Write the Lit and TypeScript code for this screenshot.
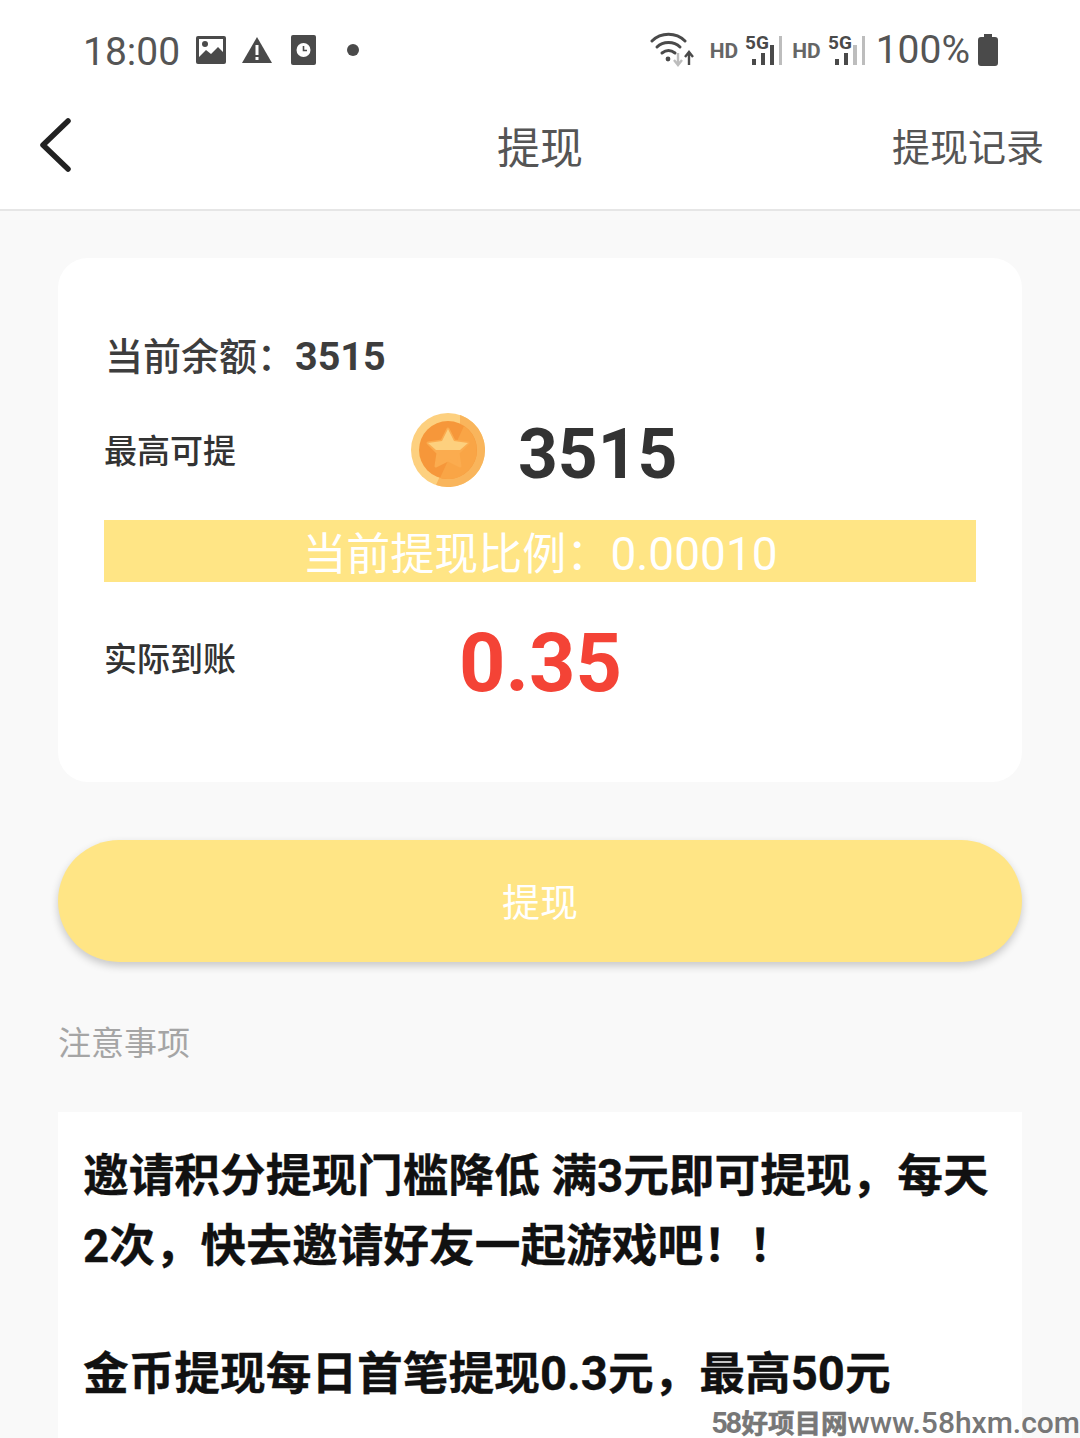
import { LitElement, html, css, svg } from 'lit';
import { customElement } from 'lit/decorators.js';

const signal = (lit: number) => svg`
  <svg class="signal" width="37" height="36" viewBox="0 0 37 36">
    <text x="0" y="17" class="five-g">5G</text>
    ${[
      [7, 27, 4, 6],
      [16, 21, 4, 12],
      [25, 13, 4, 20],
      [34, 4, 3, 29],
    ].map(
      ([x, y, w, h], i) =>
        svg`<rect x=${x} y=${y} width=${w} height=${h} fill=${i < lit ? '#4a4a4a' : '#bdbdbd'}></rect>`
    )}
  </svg>`;

@customElement('app-root')
export class AppRoot extends LitElement {
  static styles = css`
    :host {
      display: block;
      width: 1080px;
      height: 1438px;
      overflow: hidden;
      position: relative;
      background: #f9f9f9;
      font-family: Roboto, 'Noto Sans CJK SC', sans-serif;
      color: #333;
    }
    .status {
      height: 100px;
      box-sizing: border-box;
      padding: 0 82px 0 83px;
      background: #fff;
      display: flex;
      align-items: center;
      justify-content: space-between;
      color: #4a4a4a;
    }
    .status-side {
      display: flex;
      align-items: center;
    }
    .time {
      font-size: 39px;
      padding-top: 4px;
      margin-right: 16px;
      line-height: 1;
      color: #555;
    }
    .status-side svg {
      display: block;
    }
    .status-left svg {
      margin-right: 16px;
    }
    .status-left .clock {
      margin-left: 3px;
    }
    .dot {
      width: 12px;
      height: 12px;
      border-radius: 50%;
      background: #4a4a4a;
      margin-left: 15px;
    }
    .hd {
      font-size: 21px;
      font-weight: 700;
      color: #666;
      margin-right: 7px;
      padding-top: 2px;
    }
    .five-g {
      font: 700 19px Roboto, sans-serif;
      fill: #4a4a4a;
    }
    .signal {
      margin-right: 10px;
    }
    .wifi {
      margin-right: 16px;
    }
    .pct {
      font-size: 39px;
      line-height: 1;
      color: #555;
      margin: 0 8px 0 1px;
    }
    .header {
      height: 111px;
      box-sizing: border-box;
      background: #fff;
      border-bottom: 2px solid #e6e6e6;
      display: grid;
      grid-template-columns: 1fr auto 1fr;
      align-items: center;
      padding: 0 36px 20px;
    }
    .title {
      font-size: 43px;
      color: #555;
    }
    .records {
      justify-self: end;
      font-size: 38px;
      color: #555;
    }
    .back {
      display: block;
      margin-left: 4px;
    }
    .main {
      padding: 47px 58px 0;
      display: flex;
      flex-direction: column;
    }
    .card {
      height: 524px;
      box-sizing: border-box;
      background: #fff;
      border-radius: 30px;
      padding: 74px 46px 0;
    }
    .balance {
      font-size: 38px;
      font-weight: 500;
      line-height: 50px;
      margin-left: 1px;
      color: #3d3d3d;
    }
    .balance b {
      font-size: 39.5px;
      font-weight: 700;
    }
    .row {
      display: flex;
      align-items: center;
      font-size: 33px;
      font-weight: 500;
    }
    .row-max {
      margin-top: 27px;
      height: 80px;
    }
    .coin {
      margin: 2px 0 0 174px;
      display: block;
      filter: blur(0.7px);
    }
    .amount {
      font-size: 69.5px;
      font-weight: 700;
      margin: 12px 0 0 32px;
      line-height: 1;
      color: #333;
    }
    .ratio {
      margin-top: 31px;
      height: 62px;
      background: #ffe585;
      color: #fff;
      font-size: 44px;
      line-height: 68px;
      text-align: center;
    }
    .ratio span {
      font-size: 46px;
    }
    .row-real {
      margin-top: 35px;
      height: 80px;
    }
    .real {
      font-size: 81px;
      font-weight: 700;
      color: #f44336;
      line-height: 1;
      margin: 12px 0 0 223px;
    }
    .submit {
      margin-top: 58px;
      height: 122px;
      box-sizing: border-box;
      padding-bottom: 4px;
      border-radius: 61px;
      background: #ffe585;
      box-shadow: 0 4px 8px rgba(0, 0, 0, 0.2);
      color: #fff;
      font-size: 38px;
      display: flex;
      align-items: center;
      justify-content: center;
    }
    .notes-label {
      margin-top: 58px;
      font-size: 33px;
      line-height: 48px;
      color: #a5a5a5;
    }
    .notes {
      margin-top: 44px;
      height: 400px;
      box-sizing: border-box;
      background: #fff;
      padding: 30px 25px;
      font-size: 45.7px;
      font-weight: 700;
      line-height: 70px;
      color: #111;
      -webkit-text-stroke: 0.3px #111;
    }
    .notes p {
      margin: 0 0 57px;
    }
    .notes span {
      font-size: 47.3px;
    }
    .mark {
      position: absolute;
      right: 0;
      bottom: 0;
      display: flex;
      align-items: baseline;
      font-size: 26.5px;
      font-weight: 700;
      line-height: 28px;
      color: #777;
      white-space: nowrap;
    }
    .mark .cn {
      -webkit-text-stroke: 0.6px #777;
    }
    .mark .num {
      font-size: 29px;
      letter-spacing: -2.5px;
      margin-right: 2px;
    }
    .mark .url {
      font-size: 30px;
      font-weight: 500;
    }
  `;

  render() {
    return html`
      <div class="status">
        <div class="status-side status-left">
          <span class="time">18:00</span>
          <svg width="30" height="30" viewBox="0 0 30 30">
            <rect y="1" width="30" height="28" rx="2" fill="#4a4a4a"></rect>
            <rect x="3" y="4" width="24" height="19" fill="#fff"></rect>
            <circle cx="9" cy="9" r="3" fill="#4a4a4a"></circle>
            <path d="M3 22 L10 15 L15 19 L22 12 L27 17 V24 H3 Z" fill="#4a4a4a"></path>
          </svg>
          <svg width="30" height="28" viewBox="0 0 30 28">
            <path d="M15 1 L30 27 H0 Z" fill="#4a4a4a"></path>
            <rect x="13.5" y="9" width="3" height="10" fill="#fff"></rect>
            <rect x="13.5" y="21" width="3" height="3" fill="#fff"></rect>
          </svg>
          <svg class="clock" width="25" height="30" viewBox="0 0 25 30">
            <rect width="25" height="30" rx="2" fill="#4a4a4a"></rect>
            <circle cx="12.5" cy="15" r="7" fill="#fff"></circle>
            <path d="M12.5 11 V15.5 H16" fill="none" stroke="#4a4a4a" stroke-width="1.6"></path>
          </svg>
          <span class="dot"></span>
        </div>
        <div class="status-side">
          <svg class="wifi" width="44" height="36" viewBox="0 0 44 36">
            <g fill="none" stroke="#4a4a4a" stroke-width="3" stroke-linecap="round">
              <path d="M2 9 C11 0 26 0 35 9"></path>
              <path d="M7 15 C13 9 24 9 30 15"></path>
              <path d="M12 21 C16 18 21 18 25 21"></path>
            </g>
            <circle cx="18" cy="27" r="2.4" fill="#4a4a4a"></circle>
            <path d="M28 21 V32 M24 28 L28 33 L32 28" fill="none" stroke="#bdbdbd" stroke-width="2.4"></path>
            <path d="M39 33 V21 M35 25 L39 20 L43 25" fill="none" stroke="#4a4a4a" stroke-width="2.4"></path>
          </svg>
          <span class="hd">HD</span>${signal(3)}
          <span class="hd">HD</span>${signal(2)}
          <span class="pct">100%</span>
          <svg width="20" height="32" viewBox="0 0 20 32">
            <path d="M6 0 H14 V3 H17 Q20 3 20 6 V29 Q20 32 17 32 H3 Q0 32 0 29 V6 Q0 3 3 3 H6 Z" fill="#4a4a4a"></path>
          </svg>
        </div>
      </div>
      <div class="header">
        <svg class="back" width="32" height="54" viewBox="0 0 32 54">
          <path d="M28 3 L3 27 L28 51" fill="none" stroke="#222" stroke-width="5.5" stroke-linecap="round" stroke-linejoin="round"></path>
        </svg>
        <span class="title">提现</span>
        <span class="records">提现记录</span>
      </div>
      <div class="main">
        <div class="card">
          <div class="balance">当前余额：<b>3515</b></div>
          <div class="row row-max">
            <span>最高可提</span>
            <svg class="coin" width="76" height="76" viewBox="0 0 76 76">
              <circle cx="38" cy="38" r="37" fill="#fdd07f"></circle>
              <path d="M50 3 A37 37 0 0 1 26 73 L30 64 A29 29 0 0 0 50 12 Z" fill="#f9b55c"></path>
              <circle cx="38" cy="38" r="29" fill="#f6973a"></circle>
              <path d="M54 14 A29 29 0 0 1 30 66 Z" fill="#f9a546"></path>
              <path d="M38 17 L44 29 L58 31 L48 41 L50 54 L38 48 L26 54 L28 41 L18 31 L32 29 Z" fill="#fbac4f" stroke="#fbac4f" stroke-width="3" stroke-linejoin="round"></path>
              <path d="M38 17 L44 29 L58 31 L50 38 L26 38 L18 31 L32 29 Z" fill="#fdd07e"></path>
            </svg>
            <span class="amount">3515</span>
          </div>
          <div class="ratio">当前提现比例：<span>0.00010</span></div>
          <div class="row row-real">
            <span>实际到账</span>
            <span class="real">0.35</span>
          </div>
        </div>
        <div class="submit">提现</div>
        <div class="notes-label">注意事项</div>
        <div class="notes">
          <p>邀请积分提现门槛降低 满3元即可提现，每天2次，快去邀请好友一起游戏吧！！</p>
          <p>金币提现每日首笔提现<span>0.3</span>元，最高<span>50</span>元</p>
        </div>
      </div>
      <div class="mark"><span class="num">58</span><span class="cn">好项目网</span><span class="url">www.58hxm.com</span></div>
    `;
  }
}
